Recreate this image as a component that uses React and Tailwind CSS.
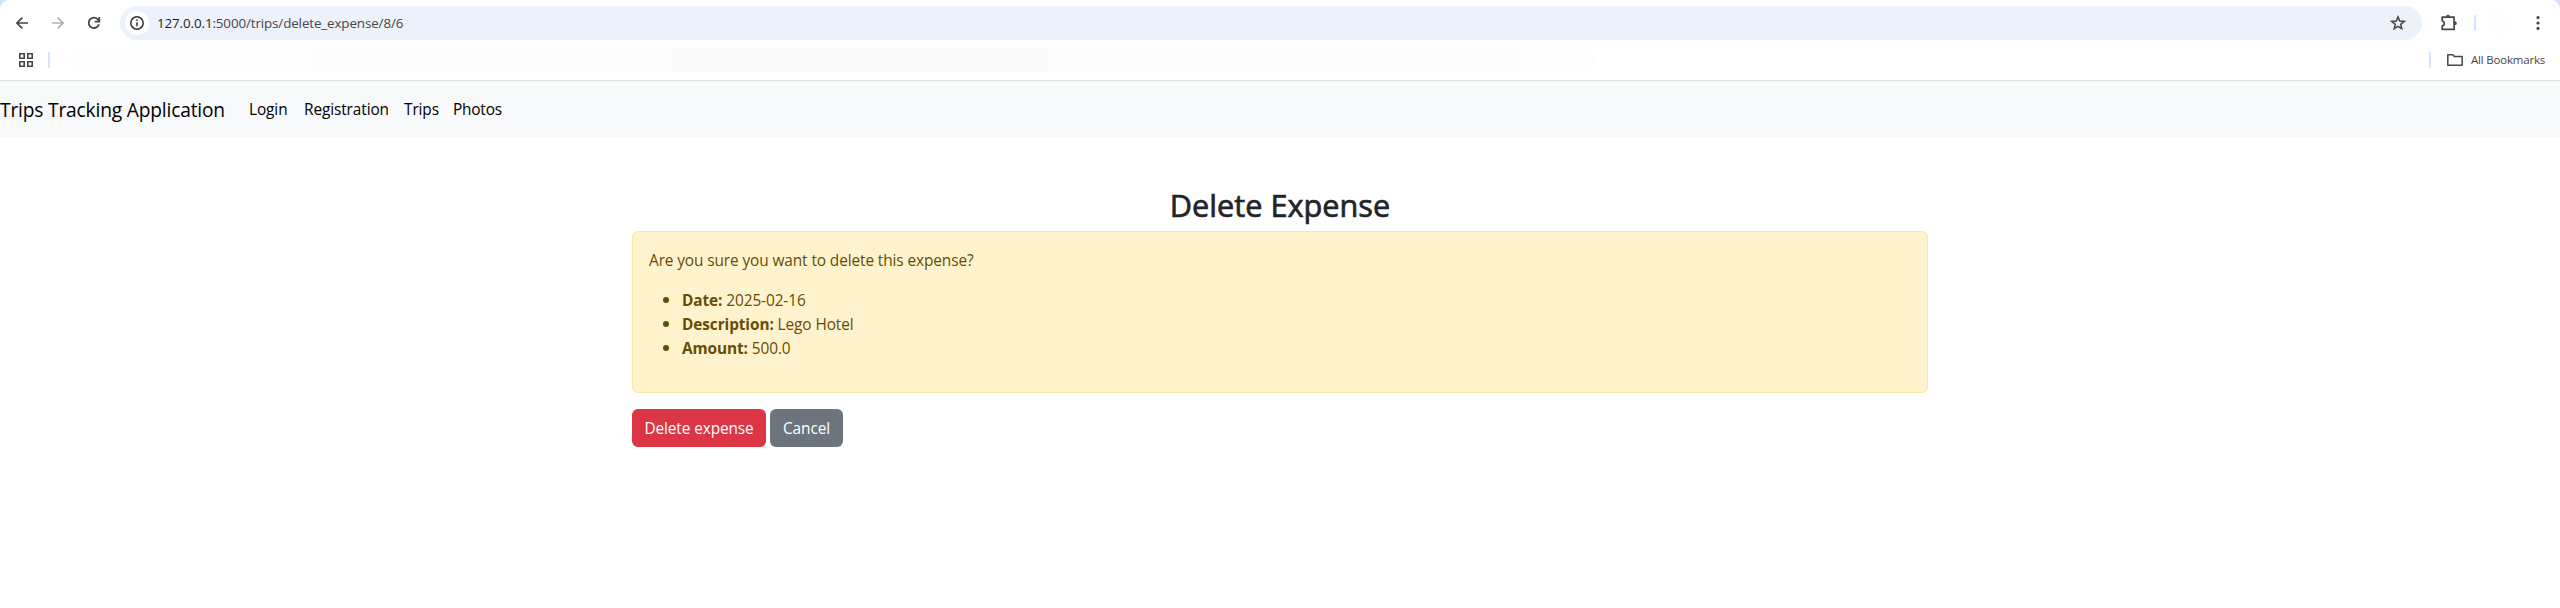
const Sep = ({ className }) => <div className={`w-0.5 h-4 rounded-full bg-[#d3e3fd] ${className}`} />;

function Toolbar() {
  return (
    <div className="flex items-center h-[46px] pl-3.5 text-[#474747]">
      <svg className="w-4 h-4 shrink-0" viewBox="0 0 16 16" fill="none" stroke="currentColor" strokeWidth="1.7">
        <path d="M14 8H3M8.3 2.6 2.9 8l5.4 5.4" />
      </svg>
      <svg className="w-4 h-4 shrink-0 ml-5 text-[#b0b0b0]" viewBox="0 0 16 16" fill="none" stroke="currentColor" strokeWidth="1.7">
        <path d="M2 8h11M7.7 2.6 13.1 8l-5.4 5.4" />
      </svg>
      <svg className="w-4 h-4 shrink-0 ml-5" viewBox="0 0 16 16" fill="none" stroke="currentColor" strokeWidth="1.8">
        <path d="M12.9 9.2A5.2 5.2 0 1 1 11.8 4.4L13.2 6" />
        <path d="M13.3 2v4.6H8.7" />
      </svg>
      <div className="flex items-center flex-1 h-[34px] ml-[18px] pl-[5px] pr-4 rounded-full bg-[#ecf1fa]">
        <div className="flex items-center justify-center w-6 h-6 rounded-full bg-white">
          <svg className="w-4 h-4" viewBox="0 0 16 16" fill="none" stroke="#333" strokeWidth="1.5">
            <circle cx="8" cy="8" r="6.2" />
            <path d="M8 7.2v4M8 4.5v1.6" />
          </svg>
        </div>
        <div className="ml-2 text-[13.4px] leading-5 tracking-[-0.12px] text-[#474747] whitespace-nowrap">
          <span className="text-[#1f1f1f]">127.0.0.1</span>:5000/trips/delete_expense/8/6
        </div>
        <svg className="w-4 h-4 ml-auto" viewBox="0 0 16 16" fill="none" stroke="currentColor" strokeWidth="1.5">
          <path d="M8 1.9l1.7 4.2 4.5.3-3.5 2.9 1.1 4.4L8 11.3l-3.8 2.4 1.1-4.4-3.5-2.9 4.5-.3z" />
        </svg>
      </div>
      <svg className="w-[18px] h-[18px] ml-[18px] shrink-0" viewBox="0 0 18 18" fill="none" stroke="currentColor" strokeWidth="1.7" strokeLinejoin="round">
        <path d="M2.2 3.2H14.1V15.4H2.2V11.9C5 11.5 5 7.4 2.2 7Z" />
        <path d="M6 2.8a2 2 0 0 1 4 0zM14.8 7.2a2 2 0 0 1 0 4z" fill="currentColor" stroke="none" />
      </svg>
      <Sep className="ml-4" />
      <div className="w-7 h-7 ml-[9px] rounded-full bg-[#fefefe]" />
      <svg className="w-4 h-4 ml-[17px] mr-3.5 shrink-0" viewBox="0 0 16 16" fill="currentColor">
        <circle cx="8" cy="2.6" r="1.6" />
        <circle cx="8" cy="8" r="1.6" />
        <circle cx="8" cy="13.4" r="1.6" />
      </svg>
    </div>
  );
}

function Bookmarks() {
  return (
    <div className="flex items-center h-[28px] pl-[19px] pr-[15px] text-[#474747]">
      <svg className="w-3.5 h-3.5" viewBox="0 0 14 14" fill="none" stroke="currentColor" strokeWidth="1.6">
        <path d="M.8.8h4.4v4.4H.8zM8.8.8h4.4v4.4H8.8zM.8 8.8h4.4v4.4H.8zM8.8 8.8h4.4v4.4H8.8z" />
      </svg>
      <Sep className="ml-[15px]" />
      <div className="ml-4 h-6 w-[1530px] rounded-full bg-linear-to-r from-[#fefefe] via-[#fafafa] to-[#fdfdfd]" />
      <Sep className="ml-auto" />
      <svg className="w-4 h-3 ml-4" viewBox="0 0 16 12" fill="none" stroke="currentColor" strokeWidth="1.5" strokeLinejoin="round">
        <path d="M.8.8h5l1.6 1.8h7.8v8.6H.8z" />
      </svg>
      <div className="ml-2 text-[11.5px] leading-4 tracking-[-0.2px] whitespace-nowrap">All Bookmarks</div>
    </div>
  );
}

const Item = ({ label, children }) => (
  <li className="flex items-center">
    <span className="w-1.5 h-1.5 mr-[13px] rounded-full bg-[#664d03]" />
    <span className="relative top-px"><b>{label}:</b> {children}</span>
  </li>
);

export default function App() {
  return (
    <div className="h-[608px] overflow-hidden bg-white font-['Open_Sans','Noto_Sans',sans-serif] text-[15.4px] leading-6 tracking-[-0.1px]">
      <div className="bg-[#d3e3fd]">
        <header className="h-20 rounded-t-[9px] bg-white">
          <Toolbar />
          <Bookmarks />
        </header>
      </div>
      <nav className="flex items-center h-[57px] pt-0.5 border-t border-[#dfe1dc] bg-[#f8f9fa] text-black whitespace-nowrap">
        <div className="w-[249px] text-[19.2px] leading-[30px] tracking-[-0.18px]">Trips Tracking Application</div>
        <div className="flex gap-4">
          <a className="w-[39px]">Login</a>
          <a className="w-[84px]">Registration</a>
          <a className="w-[33px]">Trips</a>
          <a className="tracking-[-0.2px]">Photos</a>
        </div>
      </nav>
      <main className="w-[1296px] mx-auto pt-[49px]">
        <h2 className="mb-[7px] text-center text-[30.7px] leading-[38px] tracking-normal font-medium text-[#212529] [-webkit-text-stroke:0.7px_#212529]">Delete Expense</h2>
        <div className="h-[162px] p-4 border border-[#ffe69c] rounded-md bg-[#fff3cd] text-[#664d03]">
          <p className="pt-px mb-[15px]">Are you sure you want to delete this expense?</p>
          <ul className="pl-3.5">
            <Item label="Date">2025-02-16</Item>
            <Item label="Description">Lego Hotel</Item>
            <Item label="Amount">500.0</Item>
          </ul>
        </div>
        <div className="flex gap-1 mt-4 text-white whitespace-nowrap">
          <button className="w-[134px] h-[38px] pt-0.5 rounded-md bg-[#dc3545]">Delete expense</button>
          <button className="w-[73px] h-[38px] pt-0.5 rounded-md bg-[#6c757d]">Cancel</button>
        </div>
      </main>
    </div>
  );
}
